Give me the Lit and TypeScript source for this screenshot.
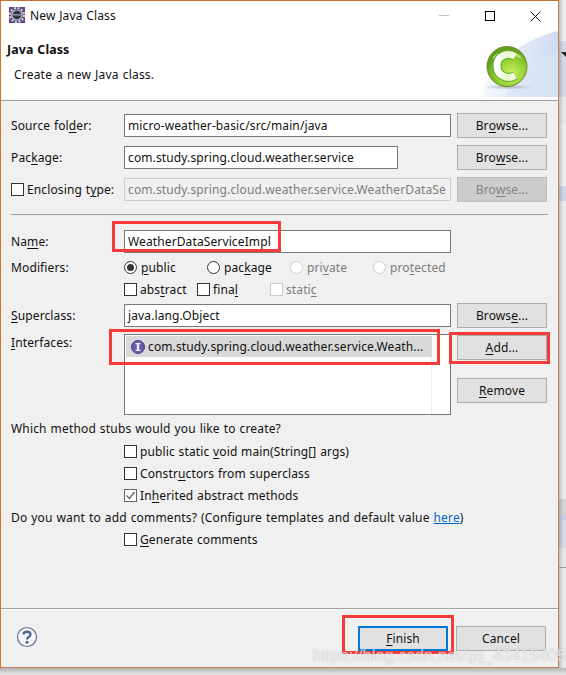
import { LitElement, html, css, svg } from "lit";
import { customElement } from "lit/decorators.js";

@customElement("app-root")
export class AppRoot extends LitElement {
  static styles = css`
    :host { display: block; width: 566px; height: 675px; overflow: hidden; position: relative; background: #e4e4e4;
      font-family: "Noto Sans", "Open Sans", sans-serif; font-size: 12px; color: #111; letter-spacing: .12px; word-spacing: .5px; }
    * { box-sizing: border-box; }
    u { text-underline-offset: 2px; text-decoration-thickness: 1px; }
    .page { display: flex; height: 668px; }
    .window { width: 559px; height: 668px; border: 1px solid #c9703a; border-color: #cc6f2c #c8825a #c8825a #d4761f; background: #f0f0f0; display: flex; flex-direction: column; flex: none; }
    .strip { flex: 1; display: flex; flex-direction: column; position: relative; }
    .seg { flex: none; }
    .s1 { height: 41px; background: linear-gradient(90deg,#bcbcbc,#ececec 4px); }
    .s2 { height: 56px; background: linear-gradient(90deg,#a9acb6,#d5d8e4 4px); position: relative; }
    .s3 { height: 27px; background: linear-gradient(90deg,#bcbcbc,#e6e6e6 4px); }
    .s4 { height: 62px; background: linear-gradient(90deg,#bcbcbc,#ededed 4px); }
    .s5 { height: 15px; background: linear-gradient(90deg,#aab,#ccd5e6 4px); }
    .s6 { height: 298px; background: linear-gradient(90deg,#bcbcbc,#e9e9e9 4px); }
    .s7 { height: 16px; background: linear-gradient(90deg,#aaa,#d4d4d4 4px); }
    .s8 { height: 5px; background: linear-gradient(90deg,#aaa,#c6cde2 4px); }
    .s9 { height: 28px; background: linear-gradient(90deg,#aaa,#d7dae6 4px); }
    .s10 { height: 19px; background: linear-gradient(90deg,#bbb,#e6e6e6 4px); }
    .s11 { height: 1px; background: #999; }
    .s12 { flex: 1; background: linear-gradient(90deg,#bcbcbc,#e9e9e9 4px); }
    .arrow { position: absolute; left: 2px; top: 11px; width: 0; height: 0; border: 5px solid transparent; border-top: 5px solid #222; border-bottom: 0; }
    .shadow { height: 7px; background: linear-gradient(#b4b4b4,#e6e6e6); }

    .top { background: #fff; height: 99px; flex: none; display: flex; flex-direction: column; position: relative; }
    .titlebar { height: 28px; display: flex; align-items: center; padding-left: 8px; gap: 5px; font-size: 12px; flex: none; }
    .tbtns { margin-left: auto; display: flex; align-items: center; height: 30px; align-self: flex-start; }
    .tbtn { width: 46px; height: 30px; display: flex; align-items: center; justify-content: center; }
    .tclose { width: 45px; }
    .tsvg { flex: none; }
    .hd { padding: 12px 0 0 6px; font-weight: 700; font-size: 12.4px; }
    .sub { padding: 8px 0 0 13px; letter-spacing: .2px; word-spacing: .7px; }
    .logo { position: absolute; right: 0; top: 0; }
    .hline { height: 1px; background: #a0a0a0; flex: none; }
    .wline { height: 1px; background: #fff; flex: none; }

    .body { flex: 1; display: flex; flex-direction: column; padding: 12px 11px 0 10px; }
    .row { display: flex; align-items: center; height: 25px; flex: none; }
    .label { width: 113px; flex: none; }
    .input { height: 23px; border: 1px solid #7a7a7a; background: #fff; padding: 0 3px; line-height: 21px; white-space: nowrap; overflow: hidden; flex: none; }
    .w327 { width: 327px; }
    .w274 { width: 274px; }
    .input.dis { background: #f0f0f0; border-color: #ccc; color: #7d7d7d; }
    .btn { width: 90px; height: 25px; border: 1px solid #adadad; background: #e1e1e1; display: flex; align-items: center; justify-content: center; flex: none; }
    .btn.dis { background: #ccc; border-color: #bfbfbf; color: #838383; }
    .btn.def { border: 2px solid #0078d7; }
    .push { margin-left: 6px; }
    .push2 { margin-left: 59px; }
    .check { display: flex; align-items: center; gap: 3px; flex: none; }
    .r83 { width: 83px; gap: 4px; }
    .r4 { gap: 4px; }
    .c73 { width: 73px; }
    .mute { color: #7d7d7d; }
    .radio { width: 13px; height: 13px; flex: none; }
    .sep { height: 1px; background: #a0a0a0; width: 537px; flex: none; margin-top: 12px; }
    .mt7 { margin-top: 7px; }
    .mt14 { margin-top: 14px; }
    .mt2 { margin-top: 2px; }
    .mt3 { margin-top: 3px; }
    .h22 { height: 22px; }
    .listrow { display: flex; align-items: flex-start; margin-top: 6px; height: 81px; flex: none; }
    .lab2 { width: 113px; flex: none; line-height: 17px; }
    .list { width: 327px; height: 81px; border: 1px solid #7a7a7a; background: #fff; padding: 1px; flex: none; position: relative; }
    .item { height: 21px; width: 306px; background: #d9d9d9; display: flex; align-items: center; gap: 3px; padding-left: 5px; white-space: nowrap; overflow: hidden; }
    .listline { position: absolute; left: 306px; top: 22px; bottom: 0; width: 1px; background: #e8eef8; }
    .col { margin-left: 6px; margin-top: 1px; display: flex; flex-direction: column; gap: 18px; flex: none; }
    .txt { height: 22px; display: flex; align-items: center; flex: none; white-space: pre; }
    .first { margin-top: 2px; }
    .cbrow { height: 22px; padding-left: 113px; display: flex; align-items: center; gap: 3px; flex: none; }
    .cbfirst { margin-top: 1px; }
    .wide { letter-spacing: .17px; word-spacing: .6px; }
    a { color: #0066cc; }
    .foot { height: 57px; flex: none; display: flex; align-items: flex-start; padding: 16px 12px 0 15px; }
    .foot .cancel { margin-left: 8px; }
    .foot .finish { margin-left: auto; }
    .mark { position: absolute; border: 3px solid #f53a3a; pointer-events: none; }
    .m1 { left: 112px; top: 221px; width: 169px; height: 31px; }
    .m2 { left: 109px; top: 329px; width: 331px; height: 36px; }
    .m3 { left: 449px; top: 332px; width: 101px; height: 32px; }
    .m4 { left: 342px; top: 615px; width: 112px; height: 39px; }
    .wm { position: absolute; left: 313px; top: 646px; font-family: "Liberation Sans", sans-serif; font-size: 16.5px; letter-spacing: 0; word-spacing: 0; color: rgba(255,255,255,.62); text-shadow: 0 0 2px rgba(120,120,120,.45); white-space: nowrap; }
  `;

  private cb(dis = false, checked = false) {
    return html`<svg class="radio" viewBox="0 0 13 13"><rect x=".5" y=".5" width="12" height="12" fill="#fff" stroke="${dis ? "#ccc" : checked ? "#666" : "#333"}"/>${checked ? svg`<path d="M2.5 6.5l3 3 5-6.5" fill="none" stroke="#666" stroke-width="1.4"/>` : ""}</svg>`;
  }
  private radio(on = false, dis = false) {
    return html`<svg class="radio" viewBox="0 0 13 13"><circle cx="6.5" cy="6.5" r="6" fill="#fff" stroke="${dis ? "#ccc" : "#333"}"/>${on ? svg`<circle cx="6.5" cy="6.5" r="3.5" fill="#333"/>` : ""}</svg>`;
  }
  private logo() {
    return html`<svg class="logo" width="76" height="99" viewBox="0 0 76 99">
      <defs>
        <linearGradient id="bg" x1="0" y1="0" x2="1" y2="0"><stop offset="0" stop-color="#f6f8fd"/><stop offset="1" stop-color="#cfdcf1"/></linearGradient>
        <radialGradient id="ball" cx=".6" cy=".68" r=".62"><stop offset="0" stop-color="#cdf064"/><stop offset=".6" stop-color="#8fd02e"/><stop offset="1" stop-color="#5f9f1c"/></radialGradient>
        <linearGradient id="cfill" x1="0" y1="0" x2="1" y2="0"><stop offset="0" stop-color="#ffffff"/><stop offset=".6" stop-color="#e6f7c8"/><stop offset="1" stop-color="#f6fde8"/></linearGradient>
        <radialGradient id="sh" cx=".5" cy=".5" r=".5"><stop offset="0" stop-color="#888" stop-opacity=".55"/><stop offset="1" stop-color="#888" stop-opacity="0"/></radialGradient>
      </defs>
      <path d="M0 96C8 65 36 40 76 30V96Z" fill="url(#bg)"/>
      <path d="M22 96C30 75 50 60 76 52V96Z" fill="#d9e4f5" opacity=".6"/>
      <ellipse cx="26" cy="86" rx="26" ry="2.6" fill="url(#sh)"/>
      <circle cx="25" cy="65.5" r="20" fill="url(#ball)" stroke="#6d8a38" stroke-width="1"/>
      <path d="M10 58C14 49 36 48 40 58C31 53 20 53 10 58Z" fill="#d6f29a" opacity=".75"/>
      <path d="M33 55.5C26 51.5 15.5 54 15 64C14.5 74 25 79.5 33 74.5" fill="none" stroke="#5ba51d" stroke-width="9"/>
      <path d="M33 55.5C26 51.5 15.5 54 15 64C14.5 74 25 79.5 33 74.5" fill="none" stroke="url(#cfill)" stroke-width="7"/>
    </svg>`;
  }
  private appIcon() {
    return html`<svg class="tsvg" width="16" height="16" viewBox="0 0 16 16">
      <rect width="16" height="16" fill="#5b4a8a"/>
      <circle cx="8" cy="8" r="7" fill="none" stroke="#d8d8d8" stroke-width="2" stroke-dasharray="2 1.7"/>
      <circle cx="8" cy="8" r="5.6" fill="#c4c4c8"/>
      <circle cx="8" cy="8" r="4.4" fill="#33333d"/>
      <rect x="3.6" y="7" width="8.8" height="1.6" fill="#8c8aa5"/>
    </svg>`;
  }

  render() {
    return html`
      <div class="page">
        <div class="window">
          <div class="top">
            ${this.logo()}
            <div class="titlebar">
              ${this.appIcon()}
              <span>New Java Class</span>
              <div class="tbtns">
                <div class="tbtn"><svg width="10" height="2"><rect width="10" height="1" fill="#c4c4c4"/></svg></div>
                <div class="tbtn"><svg width="10" height="10"><rect x=".5" y=".5" width="9" height="9" fill="none" stroke="#000"/></svg></div>
                <div class="tbtn tclose"><svg width="11" height="11"><path d="M.5 .5l10 10M10.5 .5l-10 10" stroke="#111" fill="none"/></svg></div>
              </div>
            </div>
            <div class="hd">Java Class</div>
            <div class="sub">Create a new Java class.</div>
          </div>
          <div class="hline"></div>
          <div class="body">
            <div class="row">
              <div class="label">Source fol<u>d</u>er:</div>
              <div class="input w327">micro-weather-basic/src/main/java</div>
              <div class="btn push">Br<u>o</u>wse...</div>
            </div>
            <div class="row mt7">
              <div class="label">Pac<u>k</u>age:</div>
              <div class="input w274">com.study.spring.cloud.weather.service</div>
              <div class="btn push2">Bro<u>w</u>se...</div>
            </div>
            <div class="row mt7">
              <div class="label check">${this.cb()}<span>Enclosing t<u>y</u>pe:</span></div>
              <div class="input w327 dis">com.study.spring.cloud.weather.service.WeatherDataSe</div>
              <div class="btn push dis">Bro<u>w</u>se...</div>
            </div>
            <div class="sep"></div>
            <div class="row mt14">
              <div class="label">Na<u>m</u>e:</div>
              <div class="input w327">WeatherDataServiceImpl</div>
            </div>
            <div class="row h22 mt2">
              <div class="label">Modifiers:</div>
              <div class="check r83">${this.radio(true)}<span><u>p</u>ublic</span></div>
              <div class="check r83">${this.radio()}<span>pac<u>k</u>age</span></div>
              <div class="check mute r83">${this.radio(false, true)}<span>pri<u>v</u>ate</span></div>
              <div class="check mute r4">${this.radio(false, true)}<span>pro<u>t</u>ected</span></div>
            </div>
            <div class="row h22">
              <div class="label"></div>
              <div class="check c73">${this.cb()}<span>abs<u>t</u>ract</span></div>
              <div class="check c73">${this.cb()}<span>fina<u>l</u></span></div>
              <div class="check mute">${this.cb(true)}<span>stati<u>c</u></span></div>
            </div>
            <div class="row mt3">
              <div class="label"><u>S</u>uperclass:</div>
              <div class="input w327">java.lang.Object</div>
              <div class="btn push">Brows<u>e</u>...</div>
            </div>
            <div class="listrow">
              <div class="lab2"><u>I</u>nterfaces:</div>
              <div class="list">
                <div class="item">
                  <svg class="tsvg" width="14" height="14" viewBox="0 0 14 14"><circle cx="7" cy="7" r="6.5" fill="#6a5aa8" stroke="#4d3f8c"/><rect x="5.8" y="3.5" width="2.4" height="7" fill="#f2f0fa"/><rect x="4.5" y="3" width="5" height="1.2" fill="#f2f0fa"/><rect x="4.5" y="9.8" width="5" height="1.2" fill="#f2f0fa"/></svg>
                  <span>com.study.spring.cloud.weather.service.Weath...</span>
                </div>
                <div class="listline"></div>
              </div>
              <div class="col">
                <div class="btn"><u>A</u>dd...</div>
                <div class="btn"><u>R</u>emove</div>
              </div>
            </div>
            <div class="txt first wide">Which method stubs would you like to create?</div>
            <div class="cbrow cbfirst">${this.cb()}<span>public static <u>v</u>oid main(String[] args)</span></div>
            <div class="cbrow">${this.cb()}<span>Constr<u>u</u>ctors from superclass</span></div>
            <div class="cbrow">${this.cb(false, true)}<span>In<u>h</u>erited abstract methods</span></div>
            <div class="txt wide">Do you want to add comments? (Configure templates and default value <a href="#">here</a>)</div>
            <div class="cbrow">${this.cb()}<span><u>G</u>enerate comments</span></div>
          </div>
          <div class="hline"></div>
          <div class="wline"></div>
          <div class="foot">
            <svg class="tsvg" width="22" height="22" viewBox="0 0 22 22"><circle cx="11" cy="11" r="9.5" fill="#f4f6fa" stroke="#5f7396" stroke-width="1.2"/><path d="M7.5 8.5C7.5 4.8 14.5 4.8 14.5 8.5C14.5 11 11 11 11 13.5" fill="none" stroke="#4f6690" stroke-width="2.3"/><circle cx="11" cy="16.2" r="1.5" fill="#4f6690"/></svg>
            <div class="btn def finish"><span><u>F</u>inish</span></div>
            <div class="btn cancel">Cancel</div>
          </div>
        </div>
        <div class="strip">
          <div class="seg s1"></div>
          <div class="seg s2"><div class="arrow"></div></div>
          <div class="seg s3"></div><div class="seg s4"></div><div class="seg s5"></div><div class="seg s6"></div>
          <div class="seg s7"></div><div class="seg s8"></div><div class="seg s9"></div><div class="seg s10"></div><div class="seg s11"></div><div class="seg s12"></div>
        </div>
      </div>
      <div class="shadow"></div>
      <div class="mark m1"></div><div class="mark m2"></div><div class="mark m3"></div><div class="mark m4"></div>
      <div class="wm">https://blog.csdn.net/qq_43415405</div>
    `;
  }
}
